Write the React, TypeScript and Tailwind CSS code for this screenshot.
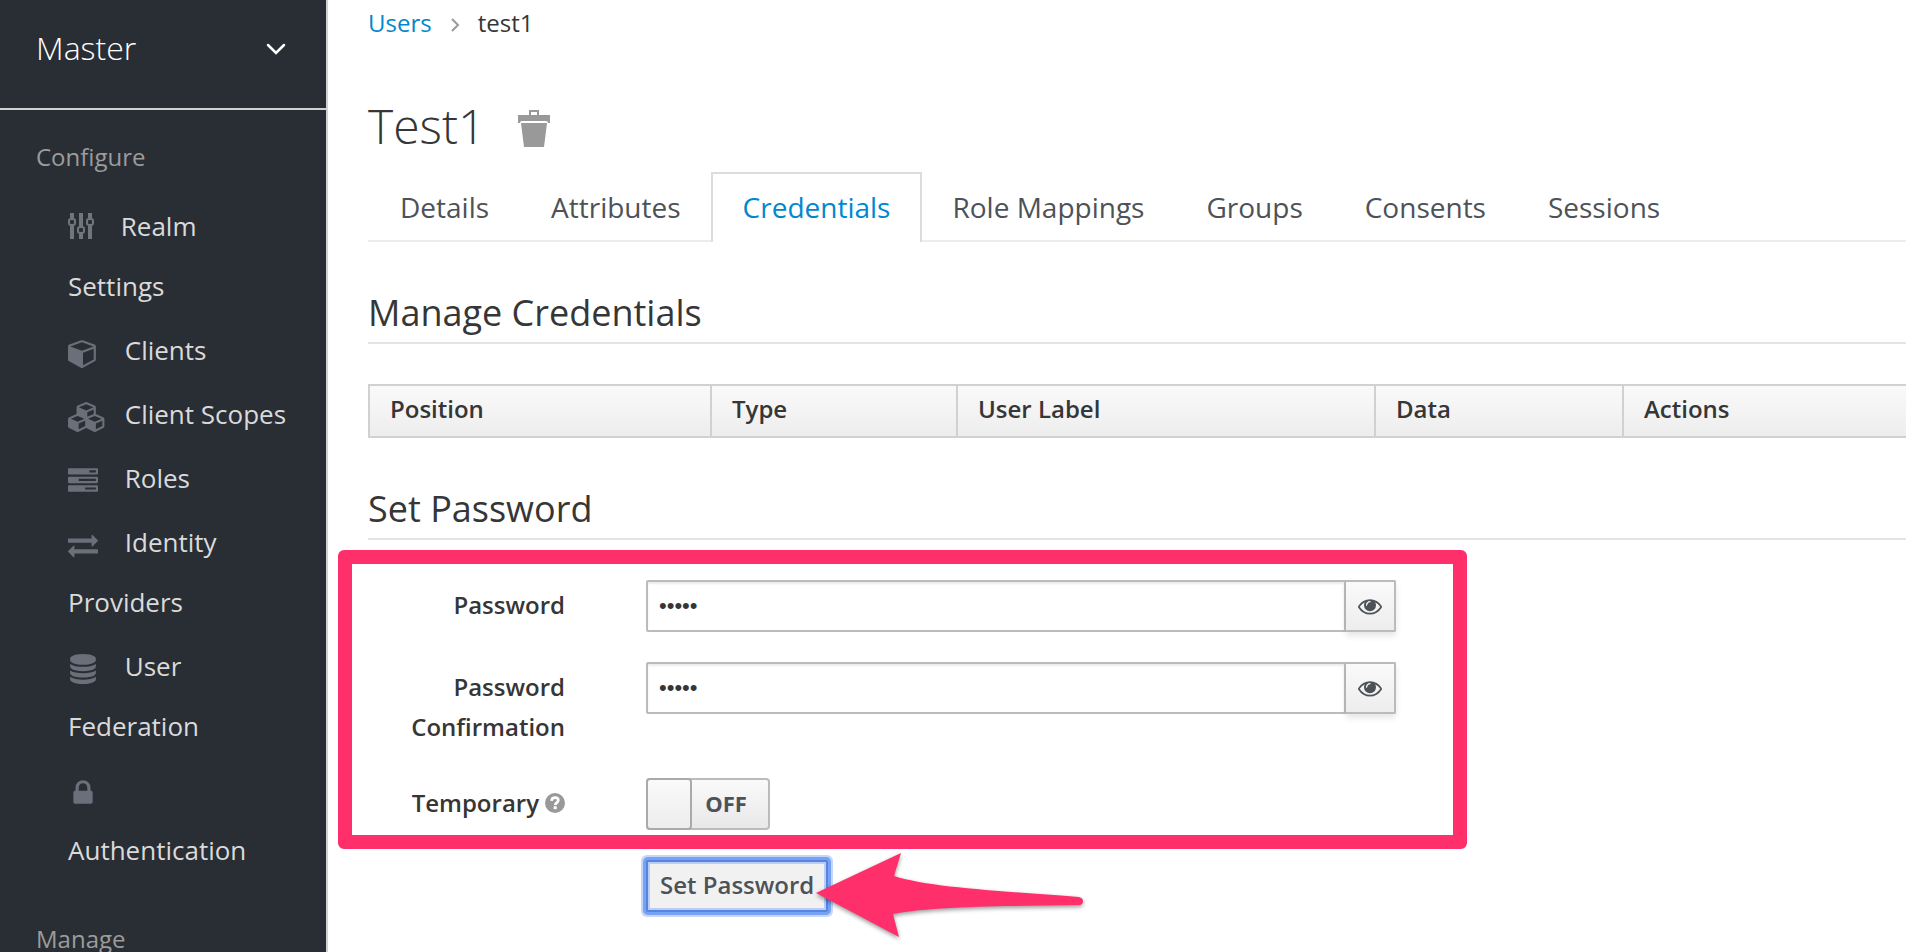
import { useState } from "react";
import type { ReactNode } from "react";

type IconName = "cube" | "cubes" | "tasks" | "exchange" | "database" | "lock";

const iconPaths: Record<IconName, string> = {
  cube: "M896 1629l640-349v-636l-640 233v752zm-64-865l698-254-698-254-698 254zm832-252v768q0 35-18 65t-49 47l-704 384q-28 16-61 16t-61-16l-704-384q-31-17-49-47t-18-65v-768q0-40 23-73t61-47l704-256q22-8 44-8t44 8l704 256q38 14 61 47t23 73z",
  cubes:
    "M640 1632l384-192v-314l-384 164v342zm-64-454l404-173-404-173-404 173zm1088 454l384-192v-314l-384 164v342zm-64-454l404-173-404-173-404 173zm-448-293l384-165v-266l-384 164v267zm-64-379l441-189-441-189-441 189zm1088 518v416q0 36-19 67t-52 47l-448 224q-25 14-57 14t-57-14l-448-224q-4-2-7-4-2 2-7 4l-448 224q-25 14-57 14t-57-14l-448-224q-33-16-52-47t-19-67v-416q0-38 21.5-70t56.5-48l434-186v-400q0-38 21.5-70t56.5-48l448-192q23-10 50-10t50 10l448 192q35 16 56.5 48t21.5 70v400l434 186q36 16 57 48t21 70z",
  tasks:
    "M1024 1408h640v-128h-640v128zm-384-512h1024v-128h-1024v128zm640-512h384v-128h-384v128zm512 832v256q0 26-19 45t-45 19h-1664q-26 0-45-19t-19-45v-256q0-26 19-45t45-19h1664q26 0 45 19t19 45zm0-512v256q0 26-19 45t-45 19h-1664q-26 0-45-19t-19-45v-256q0-26 19-45t45-19h1664q26 0 45 19t19 45zm0-512v256q0 26-19 45t-45 19h-1664q-26 0-45-19t-19-45v-256q0-26 19-45t45-19h1664q26 0 45 19t19 45z",
  exchange:
    "M1792 1184v192q0 13-9.5 22.5t-22.5 9.5h-1376v192q0 13-9.5 22.5t-22.5 9.5q-12 0-24-10l-319-320q-9-9-9-22 0-14 9-23l320-320q9-9 23-9 13 0 22.5 9.5t9.5 22.5v192h1376q13 0 22.5 9.5t9.5 22.5zm0-544q0 14-9 23l-320 320q-9 9-23 9-13 0-22.5-9.5t-9.5-22.5v-192h-1376q-13 0-22.5-9.5t-9.5-22.5v-192q0-13 9.5-22.5t22.5-9.5h1376v-192q0-14 9-23t23-9q12 0 24 10l319 319q9 9 9 23z",
  database:
    "M896 768q237 0 443-43t325-127v170q0 69-103 128t-280 93.5-385 34.5-385-34.5-280-93.5-103-128v-170q119 84 325 127t443 43zm0 768q237 0 443-43t325-127v170q0 69-103 128t-280 93.5-385 34.5-385-34.5-280-93.5-103-128v-170q119 84 325 127t443 43zm0-384q237 0 443-43t325-127v170q0 69-103 128t-280 93.5-385 34.5-385-34.5-280-93.5-103-128v-170q119 84 325 127t443 43zm0-1152q208 0 385 34.5t280 93.5 103 128v128q0 69-103 128t-280 93.5-385 34.5-385-34.5-280-93.5-103-128v-128q0-69 103-128t280-93.5 385-34.5z",
  lock: "M640 768h512v-192q0-106-75-181t-181-75-181 75-75 181v192zm832 96v576q0 40-28 68t-68 28h-960q-40 0-68-28t-28-68v-576q0-40 28-68t68-28h32v-192q0-184 132-316t316-132 316 132 132 316v192h32q40 0 68 28t28 68z",
};

function MenuIcon({ name }: { name: IconName }) {
  return (
    <svg
      viewBox="0 0 1792 1792"
      className="mr-5 inline-block size-[30px] overflow-visible fill-[#6a707a]"
      aria-hidden="true">
      <path d={iconPaths[name]} />
    </svg>
  );
}

function SlidersIcon() {
  return (
    <svg
      viewBox="0 0 26 26"
      className="mr-5 mb-1.5 inline-block size-[26px]"
      aria-hidden="true">
      <g className="fill-[#72767b]">
        <path d="M2 0h4v5H2zM2 13h4v13H2zM11 0h4v13h-4zM11 21h4v5h-4zM20 0h4v5h-4zM20 13h4v13h-4z" />
      </g>
      <g className="fill-none stroke-[#72767b]" strokeWidth="2">
        <rect x="1" y="6" width="6" height="6" rx="2" />
        <rect x="10" y="14" width="6" height="6" rx="2" />
        <rect x="19" y="6" width="6" height="6" rx="2" />
      </g>
    </svg>
  );
}

function TrashIcon() {
  return (
    <svg viewBox="0 0 32 37" className="h-[37px] w-8 fill-[#999]" aria-hidden="true">
      <path d="M11 0h10v5h11v8h-2q0-2-2-2H4q-2 0-2 2H0V5h11zM13 2v3h6V2z" fillRule="evenodd" />
      <path d="M3 13h26l-3 24H6z" />
    </svg>
  );
}

function EyeIcon() {
  return (
    <svg viewBox="0 0 1792 1792" className="size-6 fill-[#4d5258]" aria-hidden="true">
      <path d="M1664 960q-152-236-381-353 61 104 61 225 0 185-131.5 316.5t-316.5 131.5-316.5-131.5-131.5-316.5q0-121 61-225-229 117-381 353 133 205 333.5 326.5t434.5 121.5 434.5-121.5 333.5-326.5zm-720-384q0-20-14-34t-34-14q-125 0-214.5 89.5t-89.5 214.5q0 20 14 34t34 14 34-14 14-34q0-86 61-147t147-61q20 0 34-14t14-34zm848 384q0 34-20 69-140 230-376.5 368.5t-499.5 138.5-499.5-139-376.5-368q-20-35-20-69t20-69q140-229 376.5-368t499.5-139 499.5 139 376.5 368q20 35 20 69z" />
    </svg>
  );
}

function HelpIcon() {
  return (
    <svg viewBox="0 0 20 20" className="ml-1.5 size-5" aria-hidden="true">
      <circle cx="10" cy="10" r="10" className="fill-[#999]" />
      <path
        d="M6.600 7.800C6.800 5.500 8.300 4.600 10 4.600c1.900 0 3.300 1 3.300 2.700 0 2.200-3 2.300-3 4.600"
        className="fill-none stroke-white"
        strokeWidth="2.800"
      />
      <rect x="8.700" y="13.200" width="3" height="3" className="fill-white" />
    </svg>
  );
}

const menu: { label: string; icon: ReactNode }[] = [
  { label: "Realm Settings", icon: <SlidersIcon /> },
  { label: "Clients", icon: <MenuIcon name="cube" /> },
  { label: "Client Scopes", icon: <MenuIcon name="cubes" /> },
  { label: "Roles", icon: <MenuIcon name="tasks" /> },
  { label: "Identity Providers", icon: <MenuIcon name="exchange" /> },
  { label: "User Federation", icon: <MenuIcon name="database" /> },
  { label: "Authentication", icon: <MenuIcon name="lock" /> },
];

const tabs = [
  "Details",
  "Attributes",
  "Credentials",
  "Role Mappings",
  "Groups",
  "Consents",
  "Sessions",
];

const columns = [
  { label: "Position", width: "w-[342px]" },
  { label: "Type", width: "w-[246px]" },
  { label: "User Label", width: "w-[418px]" },
  { label: "Data", width: "w-[248px]" },
  { label: "Actions", width: "" },
];

function Sidebar() {
  return (
    <aside className="w-[328px] shrink-0 overflow-hidden border-r-2 border-[#d1d1d1] bg-[#292e34]">
      <button
        type="button"
        className="flex h-[110px] w-full items-start justify-between border-b-2 border-[#d1d1d1] pt-6 pr-10 pl-9 text-left text-[32px] leading-[48px] font-light text-white">
        Master
        <svg viewBox="0 0 20 12" className="mt-[19px] h-3 w-5" aria-hidden="true">
          <path
            d="M2 2l8 8 8-8"
            className="fill-none stroke-white"
            strokeWidth="2.500"
            strokeLinecap="round"
          />
        </svg>
      </button>
      <h2 className="mt-[27px] pl-9 text-2xl leading-10 text-[#9c9c9c]">Configure</h2>
      <ul className="mt-[19px] space-y-1 pr-9 pl-[68px] text-[26px] leading-[60px] text-[#dbdada]">
        {menu.map((item) => (
          <li key={item.label}>
            <a href="#" className="block">
              {item.icon} {item.label}
            </a>
          </li>
        ))}
      </ul>
      <h2 className="mt-[39px] pl-9 text-2xl leading-10 text-[#9c9c9c]">Manage</h2>
    </aside>
  );
}

function PasswordField({ id, label }: { id: string; label: string }) {
  const [value, setValue] = useState("admin");
  const [visible, setVisible] = useState(false);

  return (
    <>
      <label htmlFor={id} className="pt-[5px] pb-px text-right">
        {label}
      </label>
      <div className="flex h-[52px] w-full max-w-[750px]">
        <input
          id={id}
          type={visible ? "text" : "password"}
          value={value}
          onChange={(e) => setValue(e.target.value)}
          className="min-w-0 flex-1 rounded-l-xs border-2 border-[#bbb] bg-white px-[11px] font-['Liberation_Sans',sans-serif] text-[22px] font-normal shadow-[inset_0_2px_2px_rgba(3,3,3,0.075)] outline-none"
        />
        <button
          type="button"
          aria-label="Show password"
          onClick={() => setVisible(!visible)}
          className="flex w-[50px] items-center justify-center rounded-r-xs border-y-2 border-r-2 border-[#bbb] bg-linear-to-b from-[#fafafa] to-[#ededed] pb-px shadow-[0_4px_6px_rgba(3,3,3,0.1)]">
          <EyeIcon />
        </button>
      </div>
    </>
  );
}

function PasswordForm() {
  const [temporary, setTemporary] = useState(false);

  return (
    <form
      onSubmit={(e) => e.preventDefault()}
      className="relative mt-10 grid grid-cols-[197px_minmax(0,1fr)] gap-x-[81px] gap-y-[30px] text-2xl leading-10 font-semibold text-[#363636]">
      <PasswordField id="password" label="Password" />
      <PasswordField id="confirmation" label="Password Confirmation" />

      <label htmlFor="temporary" className="flex items-center justify-end pb-0.5">
        Temporary
        <HelpIcon />
      </label>
      <label className="flex h-[52px] w-[124px] rounded-sm border-2 border-[#bbb] bg-linear-to-b from-[#fafafa] to-[#e8e8e8]">
        <input
          id="temporary"
          type="checkbox"
          checked={temporary}
          onChange={(e) => setTemporary(e.target.checked)}
          className="sr-only"
        />
        <span className="-my-0.5 -ml-0.5 w-[46px] rounded-sm border-2 border-[#aaa] bg-linear-to-b from-[#fafafa] to-[#ededed]" />
        <span className="flex flex-1 items-center justify-center pr-2 pb-0.5 text-[22px] font-bold text-[#4d5258]">
          {temporary ? "ON" : "OFF"}
        </span>
      </label>

      <div className="relative col-start-2 justify-self-start">
        <button
          type="submit"
          className="block h-[52px] rounded-xs border-2 border-[#5585e0] bg-[#f1f1f1] px-3 pb-0.5 leading-10 text-[#4d5258] shadow-[inset_0_0_0_2px_#b9cdf7,0_0_0_3px_#76a1f4,0_0_0_5px_#c5d6fa]">
          Set Password
        </button>
        {/* callout arrow */}
        <svg
          viewBox="0 0 272 92"
          className="pointer-events-none absolute -top-2 left-[168px] h-[92px] w-[272px] fill-[#ff2f6c] drop-shadow-[0_2px_2px_rgba(0,0,0,0.4)]"
          aria-hidden="true">
          <path d="M2 41L87 1L80 24C118 36 190 39 265 45Q269 46 269 49Q269 53 265 53C200 54 118 54 79 62L85 85Z" />
        </svg>
      </div>

      {/* callout frame */}
      <div className="pointer-events-none absolute -top-[30px] -left-[30px] h-[299px] w-full max-w-[1129px] rounded-md border-[14px] border-[#ff2f6c]" />
    </form>
  );
}

export default function App() {
  return (
    <div className="flex h-screen overflow-hidden bg-white font-['Open_Sans','Noto_Sans',sans-serif] text-[#363636]">
      <Sidebar />
      <main className="min-w-0 flex-1 pl-10">
        <nav aria-label="Breadcrumb" className="mt-[3px] flex items-center text-2xl leading-10">
          <a href="#" className="text-[#0088ce]">
            Users
          </a>
          <svg viewBox="0 0 10 14" className="mx-[18px] mt-1 h-3.5 w-2.5" aria-hidden="true">
            <path d="M2 1l6 6-6 6" className="fill-none stroke-[#999]" strokeWidth="2" />
          </svg>
          <span>test1</span>
        </nav>

        <div className="mt-12 flex items-center gap-[33px]">
          <h1 className="text-5xl leading-[70px] font-light">Test1</h1>
          <button type="button" aria-label="Delete user" className="pt-1">
            <TrashIcon />
          </button>
        </div>

        <ul className="mt-[11px] flex border-b-2 border-[#ececec] text-[28px] leading-[42px] text-[#4d5258]">
          {tabs.map((tab) => (
            <li key={tab} className="-mb-0.5 not-first:-ml-0.5">
              <a
                href="#"
                className={
                  tab === "Credentials"
                    ? "block h-[70px] border-2 border-b-0 border-[#dcdcdc] bg-white px-[30px] pt-3 text-[#0088ce]"
                    : "block h-[70px] border-2 border-transparent px-[30px] pt-3"
                }>
                {tab}
              </a>
            </li>
          ))}
        </ul>

        <h2 className="mt-[43px] border-b-2 border-[#e4e4e4] pb-px text-4xl leading-[56px]">
          Manage Credentials
        </h2>
        <table className="mt-10 w-full table-fixed border-collapse text-left text-2xl leading-8 text-[#363636]">
          <thead>
            <tr className="h-[52px] bg-linear-to-b from-[#fafafa] to-[#ededed]">
              {columns.map((col) => (
                <th
                  key={col.label}
                  className={`${col.width} border-2 border-[#d1d1d1] px-5 pb-1 font-semibold last:border-r-0`}>
                  {col.label}
                </th>
              ))}
            </tr>
          </thead>
        </table>

        <h2 className="mt-[43px] border-b-2 border-[#e4e4e4] pb-px text-4xl leading-[56px]">
          Set Password
        </h2>
        <PasswordForm />
      </main>
    </div>
  );
}
